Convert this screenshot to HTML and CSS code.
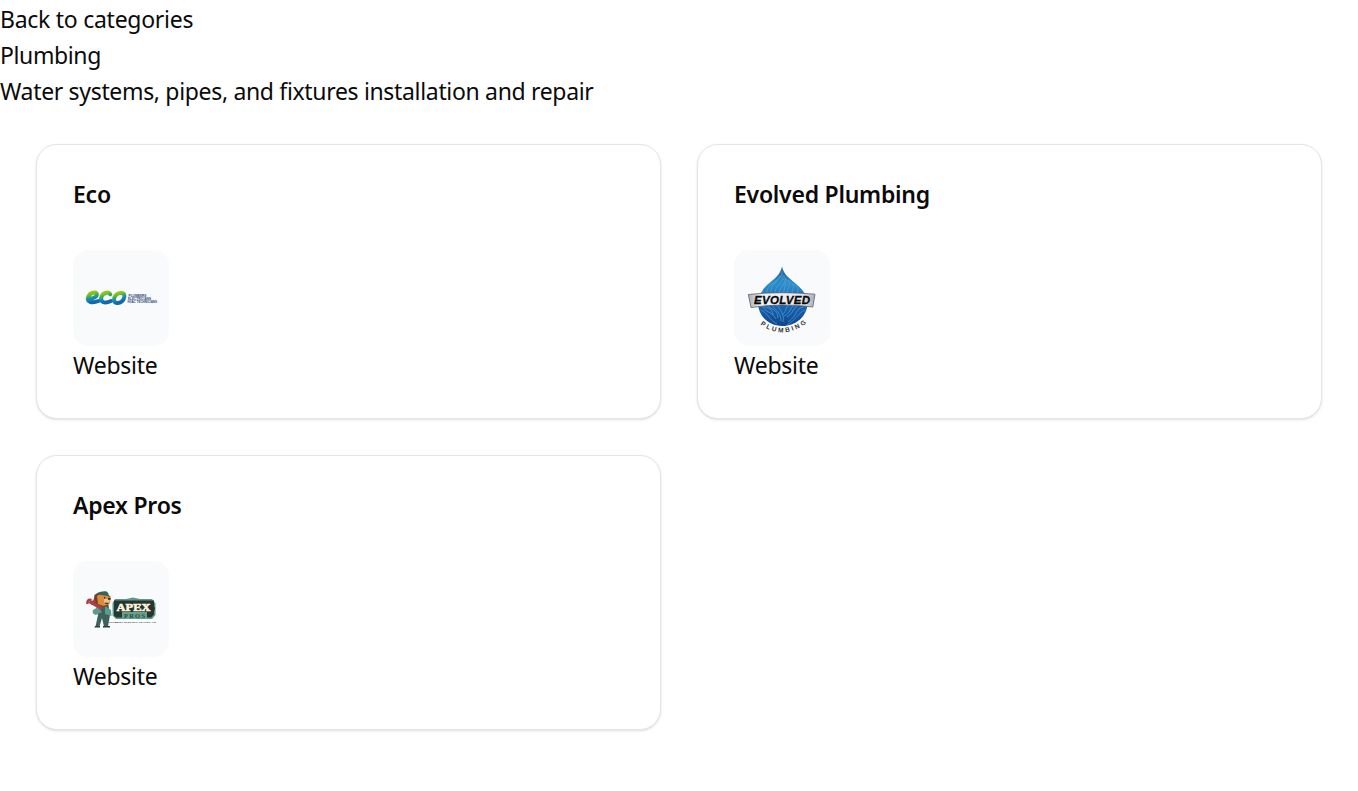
FILE: index.html
```
<!DOCTYPE html>
<html lang="en">
<head>
    <meta charset="UTF-8">
    <meta name="viewport" content="width=device-width, initial-scale=1.0">
    <title>Plumbing</title>
    <link rel="stylesheet" href="styles.css">
</head>
<body>

<div class="header">
    <div><a class="back" href="#">Back to categories</a></div>
    <h1><span class="category">Plumbing</span></h1>
    <p><span class="description">Water systems, pipes, and fixtures installation and repair</span></p>
</div>

<div class="grid">
    <div class="card">
        <h3 class="title">Eco</h3>
        <div class="logo">
            <svg width="96" height="96" viewBox="0 0 96 96">
                <defs>
                    <linearGradient id="eco" x1="0" y1="0" x2="0.35" y2="1">
                        <stop offset="0.15" stop-color="#8fc61e"/>
                        <stop offset="0.48" stop-color="#35a852"/>
                        <stop offset="0.62" stop-color="#168fc4"/>
                        <stop offset="1" stop-color="#1267ad"/>
                    </linearGradient>
                </defs>
                <g fill="none" stroke="url(#eco)" stroke-width="4" stroke-linecap="round" stroke-linejoin="round">
                    <path d="M15.5 48.7C20 48.8 24.3 46.8 23.8 44.2C23.2 41.5 16.8 42.2 15.2 46.8C13.6 51.8 18.8 53.8 25.5 51"/>
                    <path d="M37.3 44.2C35.8 41.4 30.2 42.2 28.5 46.6C26.7 51.8 31.2 54.2 38 51"/>
                    <path d="M47 43C51.8 42.4 52.3 46.2 50.4 49.6C48.2 53.7 41.6 54.2 41 50.2C40.5 46.8 43.3 43.2 47 43Z"/>
                </g>
                <g class="eco-text">
                    <text x="55.5" y="47.2" textLength="18" lengthAdjust="spacingAndGlyphs">PLUMBERS</text>
                    <text x="55" y="50.2" textLength="23" lengthAdjust="spacingAndGlyphs">ELECTRICIANS</text>
                    <text x="54.5" y="53.2" textLength="29.5" lengthAdjust="spacingAndGlyphs">HVAC TECHNICIANS</text>
                </g>
            </svg>
        </div>
        <div class="link"><a class="website" href="#">Website</a></div>
    </div>

    <div class="card">
        <h3 class="title">Evolved Plumbing</h3>
        <div class="logo">
            <svg width="96" height="96" viewBox="0 0 96 96">
                <defs>
                    <linearGradient id="drop" x1="0" y1="0" x2="0" y2="1">
                        <stop offset="0" stop-color="#1d568e"/>
                        <stop offset="0.3" stop-color="#2c8dcc"/>
                        <stop offset="0.6" stop-color="#1d69b4"/>
                        <stop offset="1" stop-color="#10418c"/>
                    </linearGradient>
                    <linearGradient id="banner">
                        <stop offset="0" stop-color="#a9adb4"/>
                        <stop offset="0.2" stop-color="#f1f2f4"/>
                        <stop offset="0.8" stop-color="#e6e8eb"/>
                        <stop offset="1" stop-color="#a9adb4"/>
                    </linearGradient>
                    <clipPath id="drop-clip">
                        <path d="M48 16.5C49.5 24 55 28 61 33C68 39 73.5 45 73.5 53C73.5 66 62 76 48.5 76C35 76 24 66 24 53C24 45 28.5 39 36 32.5C41.5 28 46.5 24 48 16.5Z"/>
                    </clipPath>
                </defs>
                <g clip-path="url(#drop-clip)">
                    <path fill="url(#drop)" d="M20 15H76V78H20Z"/>
                    <g fill="none" stroke="#5eaedd" stroke-width="0.6">
                        <path d="M48 21C49 31 35 32 37 44M46 26C44 32 32 34 33 44M48 26C50 34 39 36 41 45M49 28C54 35 44 37 45 45M49 25C56 33 48 38 50 46M51 29C61 35 50 39 54 46M54 30C65 38 55 40 59 46M60 34C68 40 61 42 64 47M35 33C26 39 29 42 28 48"/>
                        <path d="M26 53C31 59 38 56 39 65M28 55C32 64 37 60 42 69M33 54C35 60 44 58 44 68M38 54C39 60 47 60 47 71M43 54C44 59 51 62 49 72M65 55C58 57 62 61 53 67M61 55C55 57 58 62 50 66M69 57C60 60 65 64 54 72M56 55C50 57 54 60 48 65M27 60C34 63 34 69 43 74M71 60C64 63 62 70 53 75"/>
                    </g>
                </g>
                <path class="evolved-banner" fill="url(#banner)" d="M14.3 44.5Q47 41 81 44.2L78.8 57Q48 52.8 17 57.5Z"/>
                <text class="evolved-name" x="20" y="54.3" textLength="56" lengthAdjust="spacing">EVOLVED</text>
                <path id="arc" fill="none" d="M26.2 74.5Q49 91 72.5 73.2"/>
                <text class="evolved-sub"><textPath href="#arc" textLength="50" lengthAdjust="spacing">PLUMBING</textPath></text>
            </svg>
        </div>
        <div class="link"><a class="website" href="#">Website</a></div>
    </div>

    <div class="card">
        <h3 class="title">Apex Pros</h3>
        <div class="logo">
            <svg width="96" height="96" viewBox="0 0 96 96">
                <!-- bear -->
                <path fill="#3d625c" d="M23.5 46L35.5 44L37 54L35 65.5H31L29 57L26.5 65.5H22.5L25 54Z"/>
                <path fill="#5d9b8d" d="M25 46L20 49Q18.5 53 23 54L29 51ZM32 45L38 49L38.5 55L32 53Z"/>
                <path fill="#704027" d="M21.5 34Q26 29.5 34 32L37.5 36L35 45L26 46.5L20.5 41Z"/>
                <path fill="#dc8b38" d="M24 35Q29 31 34.5 34.5L38 37.5L36.5 43L30.5 45L25 43Z"/>
                <path fill="#f1c185" d="M31 38L37 37.5L36 42L31 41.5Z"/>
                <path fill="#33645e" d="M24 33.5Q26 30 33 30.3Q36.5 32 35 35Z"/>
                <path fill="#242d2b" d="M34.8 37H37.5V38.7H35ZM31 36H32.2V37.4H31ZM32 41.8H35.5V42.7H32Z"/>
                <path fill="none" stroke="#a94043" stroke-width="3.4" d="M16.5 40.5L29 47.5"/>
                <path fill="none" stroke="#a94043" stroke-width="2.6" d="M14.5 43Q14 38 18.5 39M18 43L22 39"/>
                <path fill="#253d3a" d="M22 65H27V66.5H21.5ZM30 65H37V66.5H30Z"/>
                <!-- sign -->
                <path fill="#5f9885" d="M42 38H53L60 36.5L67 38H79L82.5 42.5V54L79 58H43L39.5 54.5V42Z"/>
                <path fill="#263633" d="M41 39.5H81V45L82 47.5L81 50.5V53.5L78 56.5H43L41 54.5Z"/>
                <path fill="#65a18d" d="M49 51H74V57.5H49Z"/>
                <text class="apex-name" x="43.5" y="49.9" textLength="34" lengthAdjust="spacingAndGlyphs">APEX</text>
                <text class="apex-pros" x="51" y="56.7" textLength="21" lengthAdjust="spacing">PROS</text>
                <text class="apex-sub" x="36" y="62.2" textLength="47" lengthAdjust="spacing">PLUMBING ELECTRIC HEATING AIR</text>
            </svg>
        </div>
        <div class="link"><a class="website" href="#">Website</a></div>
    </div>
</div>

</body>
</html>
```
FILE: styles.css
```
* { box-sizing: border-box; }
body { margin: 0; font-family: "Segoe UI", "Noto Sans", sans-serif; font-size: 23px; line-height: 36px; color: #0a0a0a; background-color: #ffffff; }
h1, h3, p { margin: 0; font-size: inherit; font-weight: normal; }
a { color: inherit; text-decoration: none; }
.header { height: 108px; padding-top: 1px; }
.back { letter-spacing: -0.27px; }
.category { letter-spacing: -0.38px; }
.description { letter-spacing: -0.33px; }
.website { letter-spacing: -0.24px; }
.grid { display: grid; grid-template-columns: 1fr 1fr; gap: 36px; padding: 36px; }
.card { padding: 37px 36px 35px; border: 1px solid #e5e5e5; border-radius: 21px; background-color: #ffffff; box-shadow: 0 1px 3px rgba(0, 0, 0, 0.1), 0 1px 2px -1px rgba(0, 0, 0, 0.1); }
.card .title { margin-bottom: 44px; line-height: 24px; font-weight: 600; letter-spacing: -0.25px; }
.logo { width: 96px; height: 96px; border-radius: 15px; background-color: #f9fafb; overflow: hidden; }
.logo svg { display: block; }
.link { padding-top: 1px; }
.eco-text { font: bold 2.6px "Liberation Sans", sans-serif; fill: #314878; }
.evolved-banner { stroke: #5b6270; stroke-width: 0.8; }
.evolved-name { font: italic bold 11.5px "Liberation Sans", sans-serif; fill: #08090b; stroke: #08090b; stroke-width: 0.3; }
.evolved-sub { font: bold 6.5px "Liberation Sans", sans-serif; fill: #303238; }
.apex-name { font: bold 11px "Liberation Serif", serif; fill: #fff4da; stroke: #fff4da; stroke-width: 0.6; }
.apex-pros { font: bold 6.5px "Liberation Serif", serif; fill: #294c45; }
.apex-sub { font: bold 2.3px "Liberation Sans", sans-serif; fill: #26302e; }
```
